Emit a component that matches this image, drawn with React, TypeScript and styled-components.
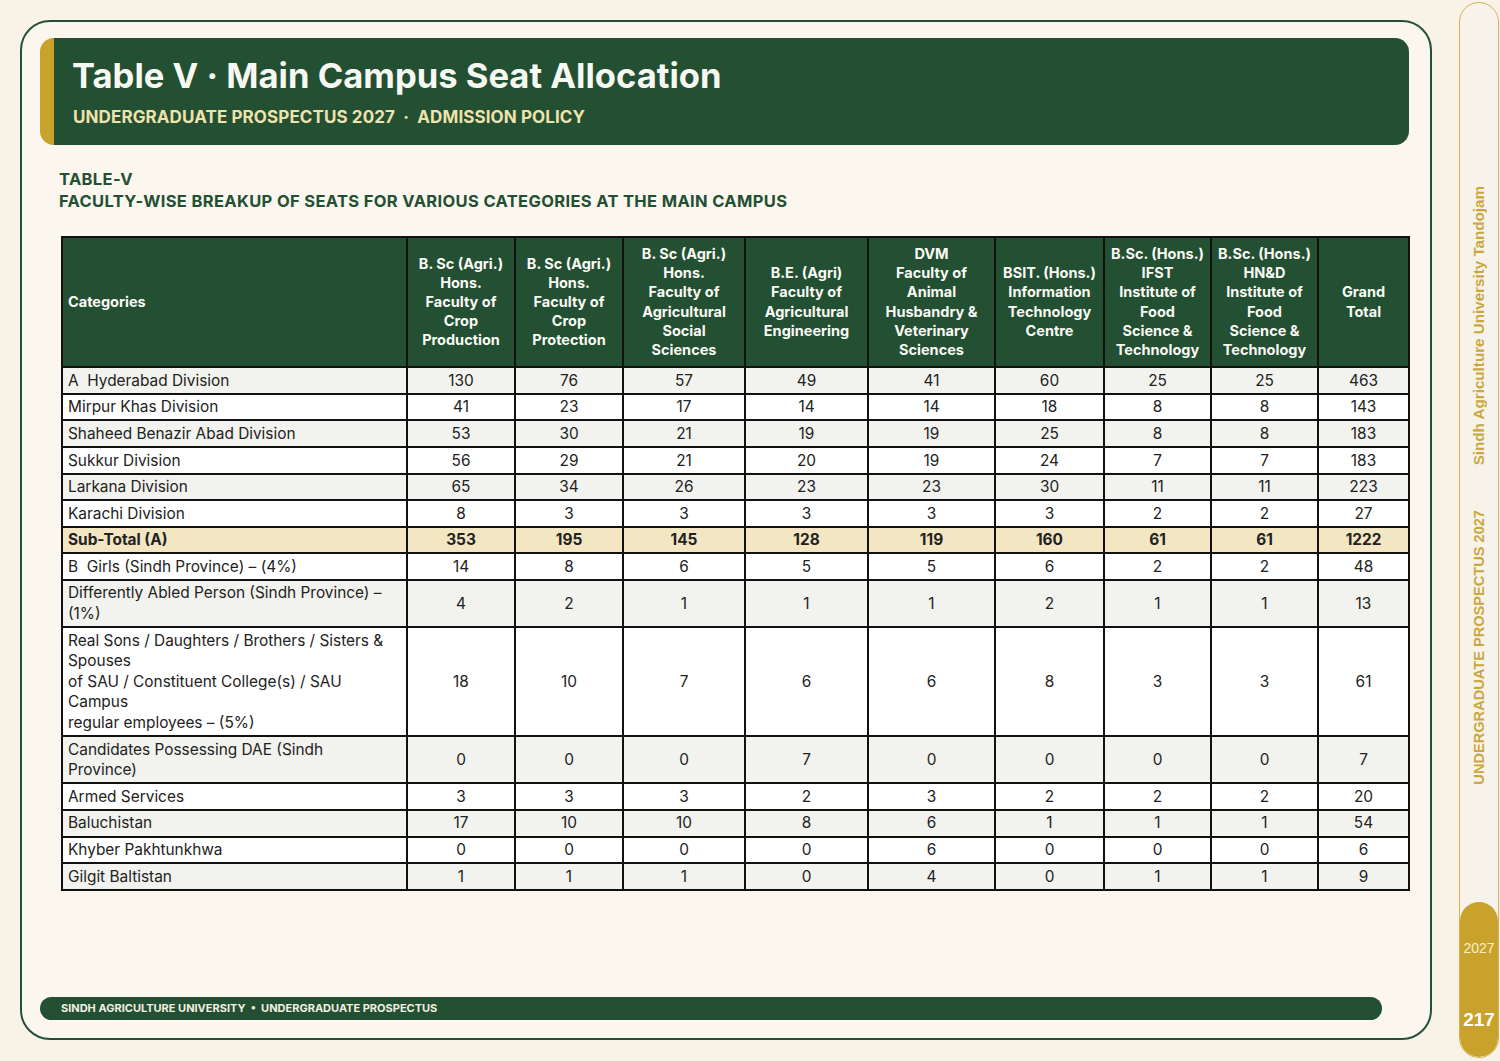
import React from "react";
import styled, { createGlobalStyle } from "styled-components";

const GREEN = "#234f33";
const GOLD = "#c9a22c";

const Global = createGlobalStyle`
  html, body { margin: 0; padding: 0; background: #f8f2e7; }
  body { font-family: Inter, "Liberation Sans", sans-serif; }
  #root { width: 1500px; height: 1061px; }
`;

const Page = styled.div`
  display: flex;
  width: 1500px;
  height: 1061px;
  box-sizing: border-box;
  overflow: hidden;
`;

const Card = styled.main`
  margin: 20px 0 21px 20px;
  width: 1412px;
  height: 1020px;
  box-sizing: border-box;
  border: 2px solid #24503a;
  border-radius: 30px;
  background: #fbf6ee;
  padding: 16px 21px 18px 18px;
  display: flex;
  flex-direction: column;
`;

const Header = styled.header`
  height: 107px;
  box-sizing: border-box;
  background: ${GREEN};
  border-left: 14px solid ${GOLD};
  border-radius: 14px;
  padding: 13px 18px 0 18px;
`;

const Title = styled.h1`
  margin: 0;
  font-family: Inter, sans-serif;
  font-weight: 700;
  font-size: 34.6px;
  line-height: 48px;
  letter-spacing: 0;
  color: #f7f8f2;
`;

const Subtitle = styled.div`
  margin-top: 7px;
  padding-left: 1px;
  font-family: Inter, sans-serif;
  font-weight: 700;
  font-size: 17px;
  line-height: 22px;
  letter-spacing: 0.1px;
  color: #efe3ad;
`;

const Body = styled.section`
  padding-left: 19px;
  display: flex;
  flex-direction: column;
`;

const Heading = styled.h2`
  margin: 23px 0 0 0;
  font-family: Inter, sans-serif;
  font-weight: 700;
  font-size: 16.5px;
  line-height: 22px;
  letter-spacing: 0.35px;
  color: ${GREEN};
`;

const Table = styled.table`
  margin: 24px 0 0 2px;
  width: 1347px;
  table-layout: fixed;
  border-collapse: collapse;
  border: 2px solid #111;
`;

const Th = styled.th<{ $left?: boolean }>`
  background: ${GREEN};
  color: #fafaf5;
  border: 2px solid #111;
  font-family: Inter, sans-serif;
  font-weight: 700;
  font-size: 14.5px;
  line-height: 19.2px;
  padding: 6px 4px 7px;
  text-align: ${(p) => (p.$left ? "left" : "center")};
  padding-left: ${(p) => (p.$left ? "5px" : "4px")};
  vertical-align: middle;
  white-space: nowrap;
`;

const Tr = styled.tr<{ $tone: "gray" | "white" | "sub" }>`
  background: ${(p) =>
    p.$tone === "sub" ? "#f3e6c3" : p.$tone === "gray" ? "#f2f2ee" : "#ffffff"};
  font-weight: ${(p) => (p.$tone === "sub" ? 700 : 400)};
`;

const Td = styled.td<{ $left?: boolean }>`
  border: 2px solid #111;
  font-family: Inter, "Liberation Sans", sans-serif;
  font-size: 15.4px;
  line-height: 20.6px;
  color: #222;
  padding: 2.5px 4px 1.5px ${(p) => (p.$left ? "5px" : "4px")};
  text-align: ${(p) => (p.$left ? "left" : "center")};
  vertical-align: middle;
`;

const Footer = styled.footer`
  margin-top: auto;
  width: 1342px;
  height: 23px;
  box-sizing: border-box;
  border-radius: 12px;
  background: ${GREEN};
  padding-left: 21px;
  font-family: Inter, sans-serif;
  font-weight: 700;
  font-size: 11px;
  line-height: 23px;
  color: #f1efe2;
`;

const Side = styled.aside`
  margin: 2px 0 3px 27px;
  width: 40px;
  box-sizing: border-box;
  border: 1.5px solid #d6b34e;
  border-radius: 20px;
  background: #f7f3ea;
  display: flex;
  flex-direction: column;
  overflow: hidden;
`;

const SideTexts = styled.div`
  flex: 1;
  padding-top: 183px;
  display: flex;
  flex-direction: column;
  align-items: center;
  gap: 45px;
`;

const VText = styled.span<{ $size: number }>`
  writing-mode: vertical-rl;
  transform: rotate(180deg);
  font-family: "Liberation Sans", Arial, sans-serif;
  font-weight: 700;
  font-size: ${(p) => p.$size}px;
  line-height: 16px;
  color: #cba83e;
  white-space: nowrap;
`;

const PageBadge = styled.div`
  height: 155px;
  border-radius: 20px;
  background: ${GOLD};
  display: flex;
  flex-direction: column;
  align-items: center;
  padding-top: 37px;
  box-sizing: border-box;
  font-family: "Liberation Sans", Arial, sans-serif;
`;

const Year = styled.span`
  font-size: 14px;
  line-height: 18px;
  color: #fbefc9;
`;

const PageNo = styled.span`
  margin-top: 52px;
  font-size: 19px;
  line-height: 22px;
  font-weight: 700;
  color: #ffffff;
`;

const widths = [345, 108, 108, 122, 123, 127, 109, 107, 107, 91];

const headers: string[][] = [
  ["B. Sc (Agri.)", "Hons.", "Faculty of", "Crop", "Production"],
  ["B. Sc (Agri.)", "Hons.", "Faculty of", "Crop", "Protection"],
  ["B. Sc (Agri.)", "Hons.", "Faculty of", "Agricultural", "Social", "Sciences"],
  ["B.E. (Agri)", "Faculty of", "Agricultural", "Engineering"],
  ["DVM", "Faculty of", "Animal", "Husbandry &", "Veterinary", "Sciences"],
  ["BSIT. (Hons.)", "Information", "Technology", "Centre"],
  ["B.Sc. (Hons.)", "IFST", "Institute of", "Food", "Science &", "Technology"],
  ["B.Sc. (Hons.)", "HN&D", "Institute of", "Food", "Science &", "Technology"],
  ["Grand", "Total"],
];

type Row = { label: string[]; values: number[]; sub?: boolean };

const rows: Row[] = [
  { label: ["A\u00a0 Hyderabad Division"], values: [130, 76, 57, 49, 41, 60, 25, 25, 463] },
  { label: ["Mirpur Khas Division"], values: [41, 23, 17, 14, 14, 18, 8, 8, 143] },
  { label: ["Shaheed Benazir Abad Division"], values: [53, 30, 21, 19, 19, 25, 8, 8, 183] },
  { label: ["Sukkur Division"], values: [56, 29, 21, 20, 19, 24, 7, 7, 183] },
  { label: ["Larkana Division"], values: [65, 34, 26, 23, 23, 30, 11, 11, 223] },
  { label: ["Karachi Division"], values: [8, 3, 3, 3, 3, 3, 2, 2, 27] },
  { label: ["Sub-Total (A)"], values: [353, 195, 145, 128, 119, 160, 61, 61, 1222], sub: true },
  { label: ["B\u00a0 Girls (Sindh Province) – (4%)"], values: [14, 8, 6, 5, 5, 6, 2, 2, 48] },
  {
    label: ["Differently Abled Person (Sindh Province) –", "(1%)"],
    values: [4, 2, 1, 1, 1, 2, 1, 1, 13],
  },
  {
    label: [
      "Real Sons / Daughters / Brothers / Sisters &",
      "Spouses",
      "of SAU / Constituent College(s) / SAU",
      "Campus",
      "regular employees – (5%)",
    ],
    values: [18, 10, 7, 6, 6, 8, 3, 3, 61],
  },
  {
    label: ["Candidates Possessing DAE (Sindh", "Province)"],
    values: [0, 0, 0, 7, 0, 0, 0, 0, 7],
  },
  { label: ["Armed Services"], values: [3, 3, 3, 2, 3, 2, 2, 2, 20] },
  { label: ["Baluchistan"], values: [17, 10, 10, 8, 6, 1, 1, 1, 54] },
  { label: ["Khyber Pakhtunkhwa"], values: [0, 0, 0, 0, 6, 0, 0, 0, 6] },
  { label: ["Gilgit Baltistan"], values: [1, 1, 1, 0, 4, 0, 1, 1, 9] },
];

const Lines: React.FC<{ lines: string[] }> = ({ lines }) => (
  <>
    {lines.map((l, i) => (
      <React.Fragment key={i}>
        {i > 0 && <br />}
        {l}
      </React.Fragment>
    ))}
  </>
);

export default function App() {
  return (
    <>
      <Global />
      <Page>
        <Card>
          <Header>
            <Title>Table V · Main Campus Seat Allocation</Title>
            <Subtitle>UNDERGRADUATE PROSPECTUS 2027&nbsp; · &nbsp;ADMISSION POLICY</Subtitle>
          </Header>
          <Body>
            <Heading>
              TABLE-V
              <br />
              FACULTY-WISE BREAKUP OF SEATS FOR VARIOUS CATEGORIES AT THE MAIN CAMPUS
            </Heading>
            <Table>
              <colgroup>
                {widths.map((w, i) => (
                  <col key={i} style={{ width: w }} />
                ))}
              </colgroup>
              <thead>
                <tr>
                  <Th $left>Categories</Th>
                  {headers.map((h, i) => (
                    <Th key={i}>
                      <Lines lines={h} />
                    </Th>
                  ))}
                </tr>
              </thead>
              <tbody>
                {rows.map((r, i) => (
                  <Tr key={i} $tone={r.sub ? "sub" : i % 2 === 0 ? "gray" : "white"}>
                    <Td $left>
                      <Lines lines={r.label} />
                    </Td>
                    {r.values.map((v, j) => (
                      <Td key={j}>{v}</Td>
                    ))}
                  </Tr>
                ))}
              </tbody>
            </Table>
          </Body>
          <Footer>SINDH AGRICULTURE UNIVERSITY&nbsp; •&nbsp; UNDERGRADUATE PROSPECTUS</Footer>
        </Card>
        <Side>
          <SideTexts>
            <VText $size={15.2}>Sindh Agriculture University Tandojam</VText>
            <VText $size={14.6}>UNDERGRADUATE PROSPECTUS 2027</VText>
          </SideTexts>
          <PageBadge>
            <Year>2027</Year>
            <PageNo>217</PageNo>
          </PageBadge>
        </Side>
      </Page>
    </>
  );
}
